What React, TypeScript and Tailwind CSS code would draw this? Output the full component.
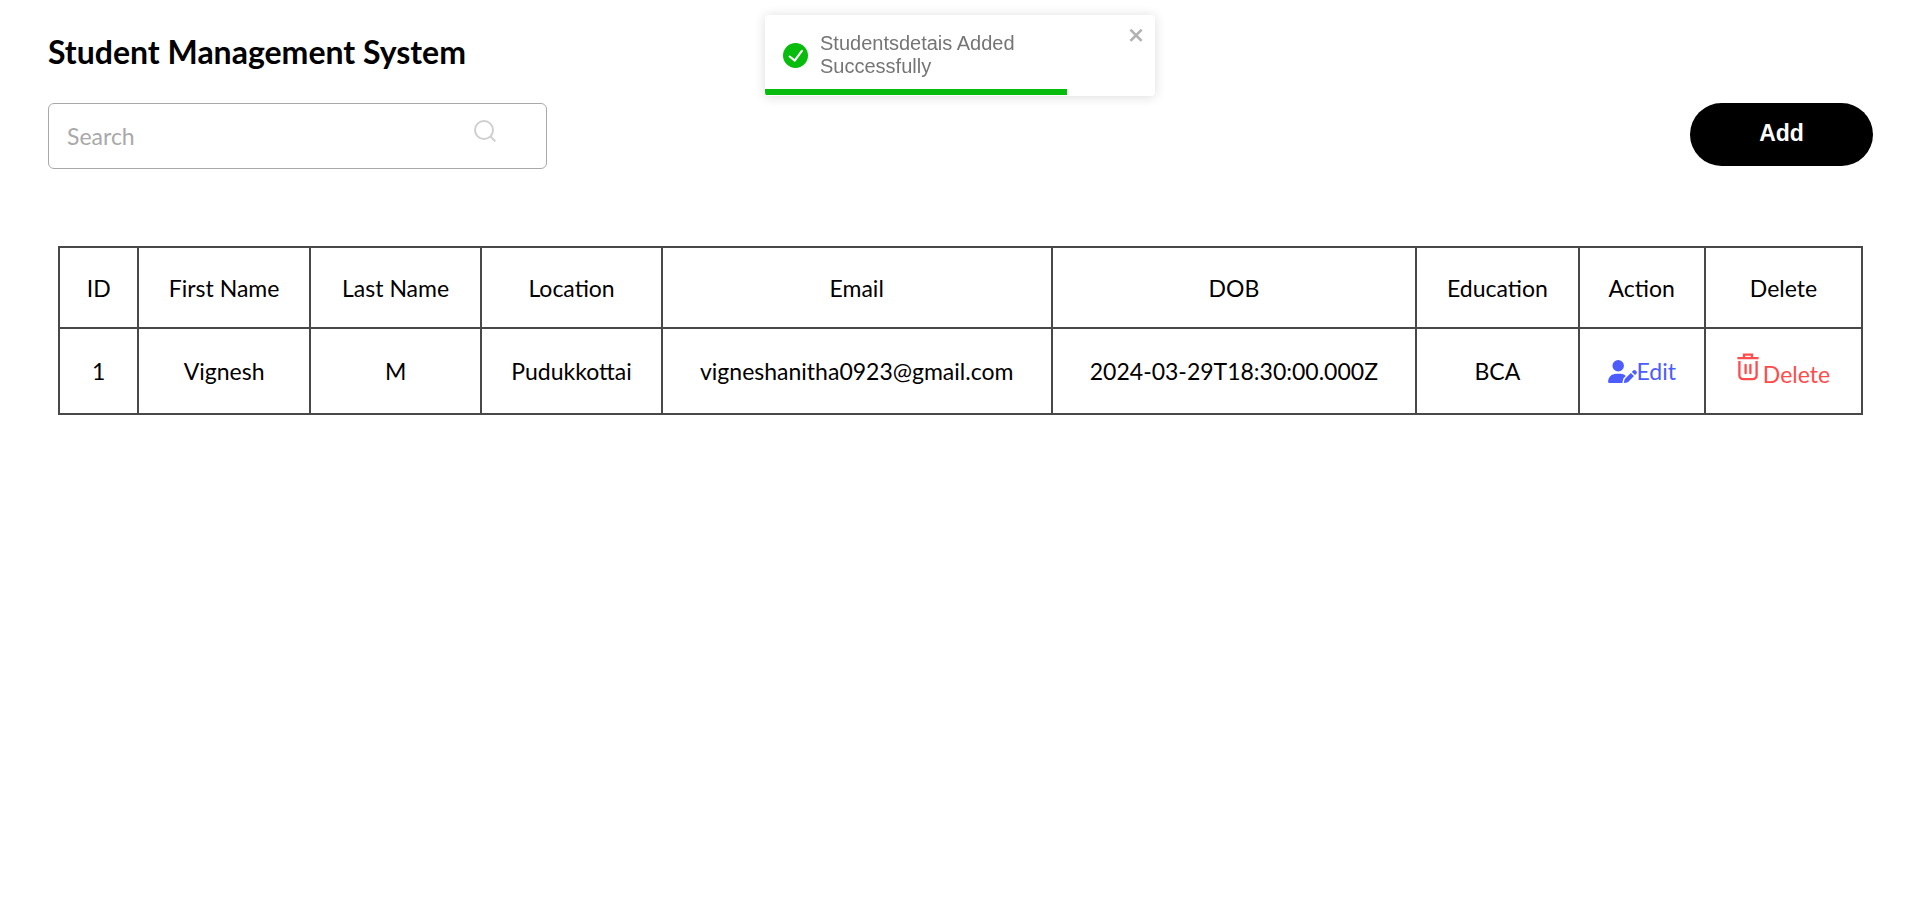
import { useState } from "react";

type Student = {
  id: number;
  firstName: string;
  lastName: string;
  location: string;
  email: string;
  dob: string;
  education: string;
};

const initialStudents: Student[] = [
  {
    id: 1,
    firstName: "Vignesh",
    lastName: "M",
    location: "Pudukkottai",
    email: "vigneshanitha0923@gmail.com",
    dob: "2024-03-29T18:30:00.000Z",
    education: "BCA",
  },
];

const columns = [
  { label: "ID", width: "w-[4.4%]" },
  { label: "First Name", width: "w-[9.5%]" },
  { label: "Last Name", width: "w-[9.5%]" },
  { label: "Location", width: "w-[10%]" },
  { label: "Email", width: "w-[21.6%]" },
  { label: "DOB", width: "w-[20.2%]" },
  { label: "Education", width: "w-[9%]" },
  { label: "Action", width: "w-[7%]" },
  { label: "Delete", width: "w-[8.7%]" },
];

function SearchIcon() {
  return (
    <svg viewBox="0 0 24 24" className="size-6" fill="none" stroke="currentColor" strokeWidth="2" aria-hidden="true">
      <circle cx="11" cy="11" r="9" />
      <path d="M17.2 17.2 22.4 22.4" />
    </svg>
  );
}

function CheckIcon() {
  return (
    <svg viewBox="0 0 24 24" className="size-[25px] shrink-0" fill="#07bc0c" aria-hidden="true">
      <path d="M12 0a12 12 0 1012 12A12.014 12.014 0 0012 0zm6.927 8.2l-6.845 9.289a1.011 1.011 0 01-1.43.188l-4.888-3.908a1 1 0 111.25-1.562l4.076 3.261 6.227-8.451a1 1 0 111.61 1.183z" />
    </svg>
  );
}

function CloseIcon() {
  return (
    <svg viewBox="0 0 14 16" className="h-5 w-[18px]" fill="currentColor" aria-hidden="true">
      <path
        fillRule="evenodd"
        d="M7.71 8.23l3.75 3.75-1.48 1.48-3.75-3.75-3.75 3.75L1 11.98l3.75-3.75L1 4.48 2.48 3l3.75 3.75L9.98 3l1.48 1.48-3.75 3.75z"
      />
    </svg>
  );
}

function UserPenIcon() {
  return (
    <svg viewBox="0 0 640 512" className="h-[23px] w-[29px]" fill="currentColor" aria-hidden="true">
      <path d="M224 256A128 128 0 1 0 224 0a128 128 0 1 0 0 256zm-45.7 48C79.8 304 0 383.8 0 482.3C0 498.7 13.3 512 29.7 512H322.8c-3.1-8.8-3.7-18.4-1.4-27.8l15-60.1c2.8-11.3 8.6-21.5 16.8-29.7l40.3-40.3c-32.1-31-75.7-50.1-123.9-50.1H178.3zm435.5-68.3c-15.6-15.6-40.9-15.6-56.6 0l-29.4 29.4 71 71 29.4-29.4c15.6-15.6 15.6-40.9 0-56.6l-14.4-14.4zM375.9 417c-4.1 4.1-7 9.2-8.4 14.9l-15 60.1c-1.4 5.5 .2 11.2 4.2 15.2s9.7 5.6 15.2 4.2l60.1-15c5.6-1.4 10.8-4.3 14.9-8.4L576.1 358.7l-71-71L375.9 417z" />
    </svg>
  );
}

function TrashIcon() {
  return (
    <svg viewBox="0 0 22 28" className="h-7 w-[22px]" fill="none" stroke="currentColor" strokeWidth="2.3" aria-hidden="true">
      <path d="M0.4 5.2H21.6M7 5.2V1.6H15V5.2" />
      <path d="M2.4 8V22.4A3.8 3.8 0 0 0 6.2 26.2H15.8A3.8 3.8 0 0 0 19.6 22.4V8" />
      <path d="M8.6 12V20.2M13.4 12V20.2" strokeLinecap="round" />
    </svg>
  );
}

function Toast({ message, onClose }: { message: string; onClose: () => void }) {
  return (
    <div
      role="alert"
      className="fixed top-[15px] left-1/2 flex h-[81px] w-[390px] -translate-x-1/2 items-center overflow-hidden rounded bg-white pl-[18px] font-['Liberation_Sans',sans-serif] text-xl leading-[23px] text-[#757575] shadow-[0_1px_12px_rgba(0,0,0,0.14)]"
    >
      <CheckIcon />
      <p className="ml-3 w-[270px] pb-[2px]">{message}</p>
      <button type="button" aria-label="Close" onClick={onClose} className="absolute top-[10px] right-[9px] text-[#b2b2b2]">
        <CloseIcon />
      </button>
      <div className="absolute bottom-px left-0 h-[6px] w-[302px] bg-[#07bc0c]" />
    </div>
  );
}

export default function App() {
  const [students, setStudents] = useState(initialStudents);
  const [query, setQuery] = useState("");
  const [toastOpen, setToastOpen] = useState(true);

  const visible = students.filter((s) => s.firstName.toLowerCase().includes(query.toLowerCase()));

  return (
    <main className="min-h-screen bg-white pt-8 pr-[47px] pl-12 font-['Lato',sans-serif] text-[23px] text-black">
      <h1 className="text-[32px] leading-10 font-bold">Student Management System</h1>

      <div className="mt-[31px] flex items-start justify-between">
        <div className="relative w-[499px]">
          <input
            type="search"
            aria-label="Search"
            placeholder="Search"
            value={query}
            onChange={(e) => setQuery(e.target.value)}
            className="h-[66px] w-full rounded-md border border-[#a9a9a9] pr-20 pl-[18px] text-[23px] placeholder:text-[#a9a9a9]"
          />
          <span className="pointer-events-none absolute top-4 right-[50px] text-[#cfcfcf]">
            <SearchIcon />
          </span>
        </div>
        <button
          type="button"
          className="h-[63px] w-[183px] rounded-full bg-black pb-[2px] font-['Liberation_Sans',sans-serif] text-[23px] font-bold text-white"
        >
          Add
        </button>
      </div>

      <div className="mx-[10px] mt-[77px]">
        <table className="w-full table-fixed border-collapse text-center">
          <thead>
            <tr className="h-[81px]">
              {columns.map((c) => (
                <th key={c.label} scope="col" className={`${c.width} border-2 border-[#484848] pt-[2px] font-normal`}>
                  {c.label}
                </th>
              ))}
            </tr>
          </thead>
          <tbody>
            {visible.map((s) => (
              <tr key={s.id} className="h-[86px]">
                <td className="border-2 border-[#484848]">{s.id}</td>
                <td className="border-2 border-[#484848]">{s.firstName}</td>
                <td className="border-2 border-[#484848]">{s.lastName}</td>
                <td className="border-2 border-[#484848]">{s.location}</td>
                <td className="border-2 border-[#484848]">{s.email}</td>
                <td className="border-2 border-[#484848]">{s.dob}</td>
                <td className="border-2 border-[#484848]">{s.education}</td>
                <td className="border-2 border-[#484848] pt-[3px]">
                  <button type="button" className="inline-flex items-center text-[#4c5cff]">
                    <UserPenIcon />
                    Edit
                  </button>
                </td>
                <td className="border-2 border-[#484848] pt-[3px]">
                  <button
                    type="button"
                    onClick={() => setStudents(students.filter((x) => x.id !== s.id))}
                    className="inline-flex items-start gap-1 text-[#ff4c4c]"
                  >
                    <TrashIcon />
                    <span className="pt-1">Delete</span>
                  </button>
                </td>
              </tr>
            ))}
          </tbody>
        </table>
      </div>

      {toastOpen && <Toast message="Studentsdetais Added Successfully" onClose={() => setToastOpen(false)} />}
    </main>
  );
}
